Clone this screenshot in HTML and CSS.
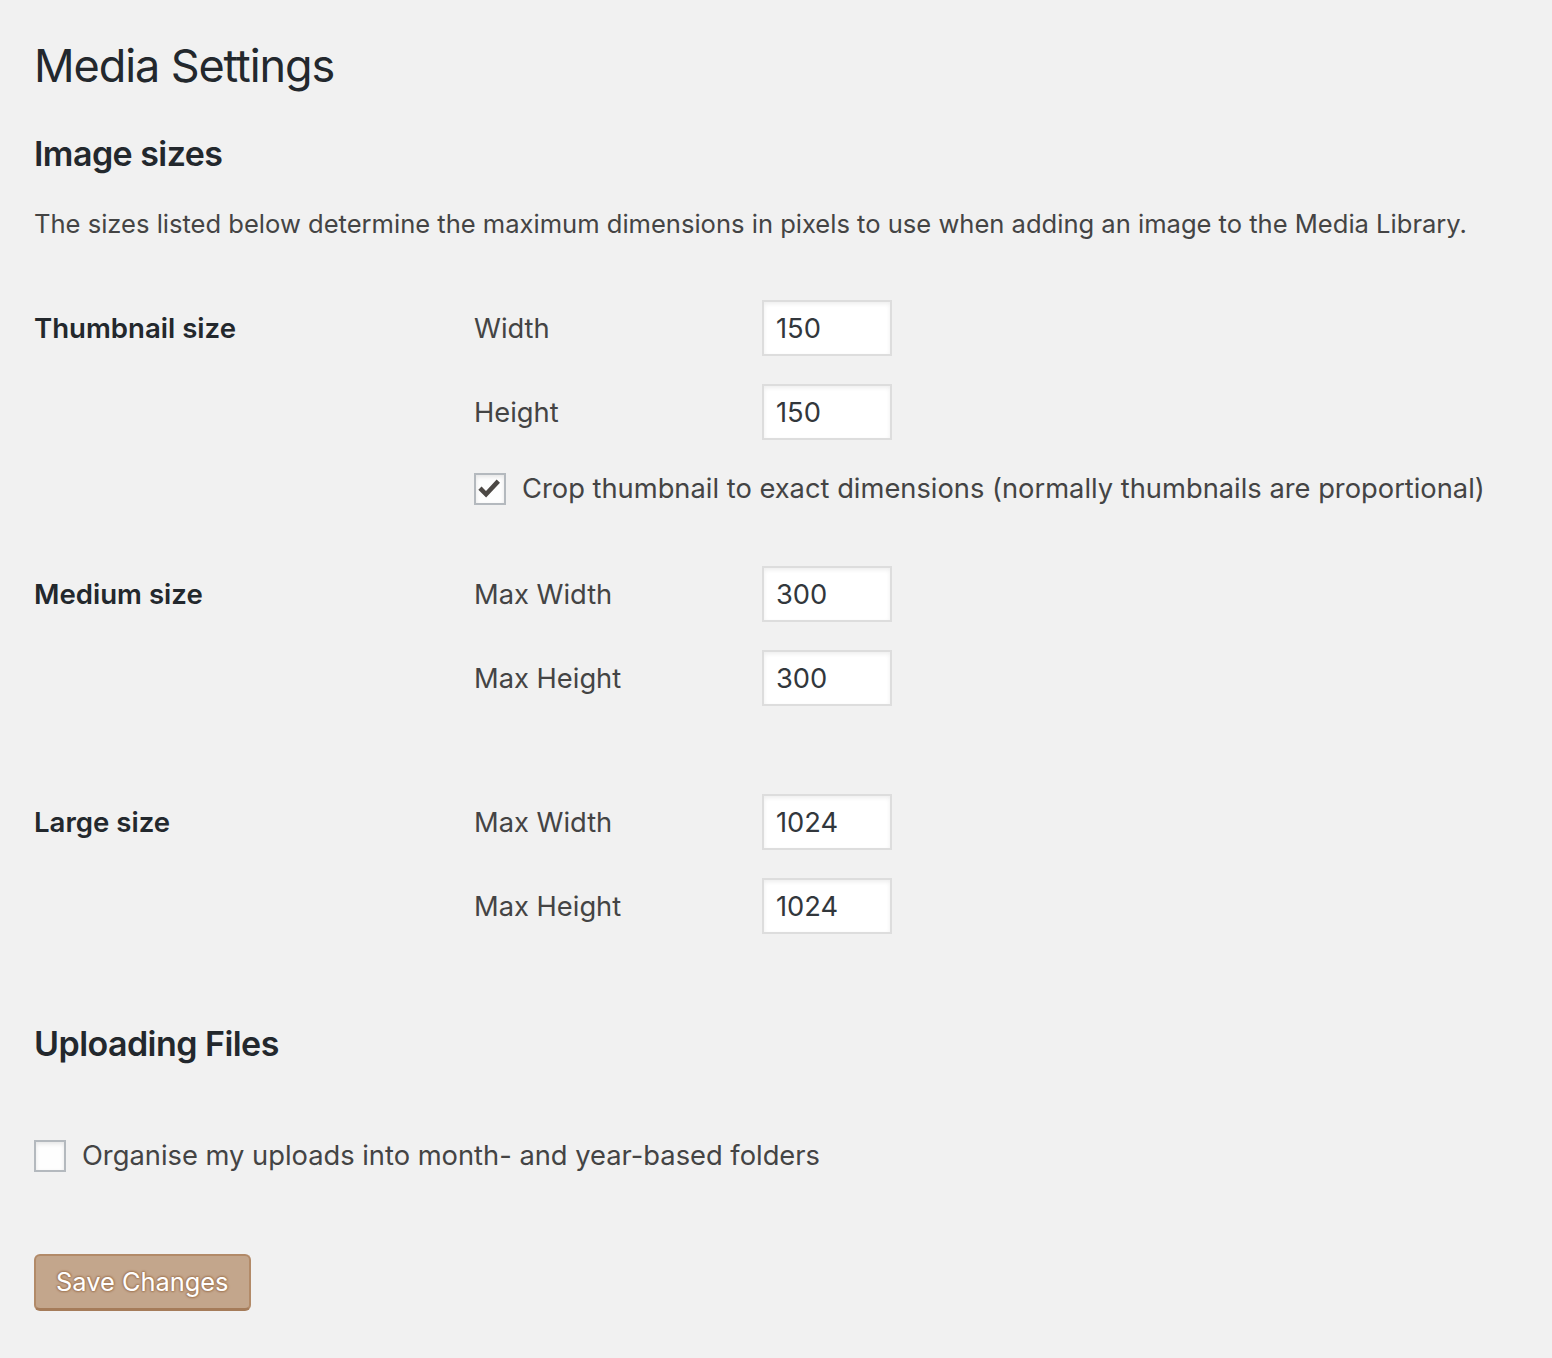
FILE: index.html
```html
<!DOCTYPE html>
<html lang="en">
<head>
<meta charset="utf-8">
<title>Media Settings</title>
<link rel="stylesheet" href="styles.css">
</head>
<body>
<div class="wrap">
  <h1 class="page-title">Media Settings</h1>
  <h2 class="section-title">Image sizes</h2>
  <p class="desc">The sizes listed below determine the maximum dimensions in pixels to use when adding an image to the Media Library.</p>

  <div class="size-group thumb">
    <div class="group-label">Thumbnail size</div>
    <div class="fields">
      <div class="field"><label class="field-label">Width</label><input class="num" type="text" value="150"></div>
      <div class="field"><label class="field-label">Height</label><input class="num" type="text" value="150"></div>
      <div class="check-row">
        <span class="checkbox checked"><svg viewBox="0 0 32 32" width="28" height="28"><polyline points="4.5,15 11.5,22 25.5,7" fill="none" stroke="#4c4844" stroke-width="5.2" stroke-linecap="butt" stroke-linejoin="miter"/></svg></span>
        <span class="check-text">Crop thumbnail to exact dimensions (normally thumbnails are proportional)</span>
      </div>
    </div>
  </div>

  <div class="size-group medium">
    <div class="group-label">Medium size</div>
    <div class="fields">
      <div class="field"><label class="field-label">Max Width</label><input class="num" type="text" value="300"></div>
      <div class="field"><label class="field-label">Max Height</label><input class="num" type="text" value="300"></div>
    </div>
  </div>

  <div class="size-group large">
    <div class="group-label">Large size</div>
    <div class="fields">
      <div class="field"><label class="field-label">Max Width</label><input class="num" type="text" value="1024"></div>
      <div class="field"><label class="field-label">Max Height</label><input class="num" type="text" value="1024"></div>
    </div>
  </div>

  <h2 class="section-title uploading">Uploading Files</h2>

  <div class="check-row upload-row">
    <span class="checkbox"></span>
    <span class="check-text">Organise my uploads into month- and year-based folders</span>
  </div>

  <button class="save-btn" type="button">Save Changes</button>
</div>
</body>
</html>
```

FILE: styles.css
```css
html, body {
  margin: 0;
  padding: 0;
  background: #f1f1f1;
}

body {
  font-family: Inter, "Noto Sans", "Liberation Sans", sans-serif;
  font-size: 26px;
  color: #444;
  height: 1358px;
}

.wrap {
  padding: 36px 34px 0 34px;
}

.page-title {
  margin: 0;
  font-size: 45px;
  font-weight: 400;
  line-height: 60px;
  color: #23282d;
  letter-spacing: -1.1px;
}

.section-title {
  margin: 38px 0 0 0;
  font-size: 34px;
  font-weight: 600;
  line-height: 40px;
  color: #23282d;
  letter-spacing: -0.55px;
}

.desc {
  margin: 30px 0 0 0;
  line-height: 40px;
  font-size: 25.55px;
}

.size-group {
  display: grid;
  grid-template-columns: 440px 1fr;
}

.size-group.thumb { margin-top: 56px; }
.size-group.medium { margin-top: 61px; }
.size-group.large { margin-top: 88px; }

.group-label {
  font-weight: 600;
  color: #23282d;
  line-height: 56px;
  font-size: 27.6px;
}

.fields {
  display: flex;
  flex-direction: column;
  gap: 28px;
}

.field {
  display: flex;
  align-items: center;
  height: 56px;
}

.field-label {
  width: 288px;
  font-size: 27.3px;
}

.num {
  box-sizing: border-box;
  width: 130px;
  height: 56px;
  margin: 0;
  padding: 0 12px;
  border: 2px solid #dddddd;
  background: #fff;
  box-shadow: inset 0 2px 4px rgba(0, 0, 0, 0.07);
  font-family: inherit;
  font-size: 27.3px;
  color: #32373c;
  outline: none;
}

.check-row {
  display: flex;
  align-items: center;
  gap: 16px;
  height: 32px;
}

.fields .check-row {
  margin-top: 5px;
}

.checkbox {
  box-sizing: border-box;
  width: 32px;
  height: 32px;
  flex: none;
  border: 2px solid #b4b9be;
  background: #fefefe;
  box-shadow: inset 0 2px 4px rgba(0, 0, 0, 0.1);
  display: flex;
  align-items: center;
  justify-content: center;
}

.checkbox svg {
  display: block;
}

.check-text {
  font-size: 27.3px;
  line-height: 32px;
}

.uploading {
  margin-top: 90px;
}

.upload-row {
  margin-top: 76px;
}

.save-btn {
  display: block;
  box-sizing: border-box;
  margin-top: 82px;
  height: 57px;
  padding: 0 20px;
  border: 2px solid #b28a68;
  border-bottom-color: #a57c5a;
  border-bottom-width: 3px;
  border-radius: 6px;
  background: #c3a68c;
  color: #fff;
  font-family: inherit;
  font-size: 25.4px;
  line-height: 50px;
  text-shadow: 0 -1px 2px #a57d5b, 1px 0 2px #a57d5b, 0 1px 2px #a57d5b, -1px 0 2px #a57d5b;
  cursor: pointer;
}
```
